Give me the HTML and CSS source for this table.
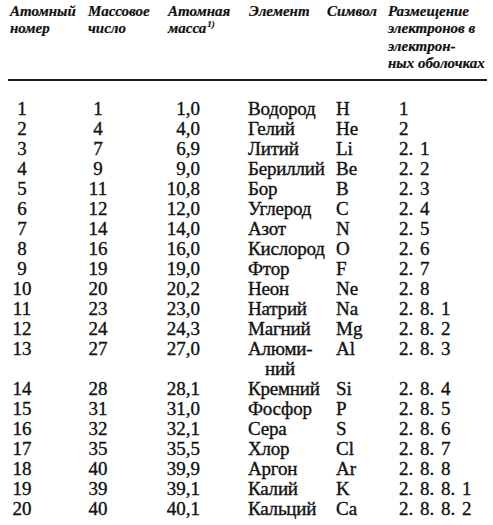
FILE: index.html
```html
<!DOCTYPE html>
<html lang="ru">
<head>
<meta charset="utf-8">
<title>Элементы</title>
<link rel="stylesheet" href="styles.css">
</head>
<body>
<div class="sheet">
  <div class="head">
    <div class="h h1">Атомный<br>номер</div>
    <div class="h h2">Массовое<br>число</div>
    <div class="h h3">Атомная<br>масса<sup>1)</sup></div>
    <div class="h h4">Элемент</div>
    <div class="h h5">Символ</div>
    <div class="h h6">Размещение<br>электронов в<br>электрон-<br>ных оболочках</div>
  </div>
  <div class="rule"></div>
  <div class="rows">
    <div class="c n">1</div><div class="c m">1</div><div class="c w">1,0</div><div class="c e">Водород</div><div class="c s">H</div><div class="c k">1</div>
    <div class="c n">2</div><div class="c m">4</div><div class="c w">4,0</div><div class="c e">Гелий</div><div class="c s">He</div><div class="c k">2</div>
    <div class="c n">3</div><div class="c m">7</div><div class="c w">6,9</div><div class="c e">Литий</div><div class="c s">Li</div><div class="c k">2. 1</div>
    <div class="c n">4</div><div class="c m">9</div><div class="c w">9,0</div><div class="c e">Бериллий</div><div class="c s">Be</div><div class="c k">2. 2</div>
    <div class="c n">5</div><div class="c m">11</div><div class="c w">10,8</div><div class="c e">Бор</div><div class="c s">B</div><div class="c k">2. 3</div>
    <div class="c n">6</div><div class="c m">12</div><div class="c w">12,0</div><div class="c e">Углерод</div><div class="c s">C</div><div class="c k">2. 4</div>
    <div class="c n">7</div><div class="c m">14</div><div class="c w">14,0</div><div class="c e">Азот</div><div class="c s">N</div><div class="c k">2. 5</div>
    <div class="c n">8</div><div class="c m">16</div><div class="c w">16,0</div><div class="c e">Кислород</div><div class="c s">O</div><div class="c k">2. 6</div>
    <div class="c n">9</div><div class="c m">19</div><div class="c w">19,0</div><div class="c e">Фтор</div><div class="c s">F</div><div class="c k">2. 7</div>
    <div class="c n">10</div><div class="c m">20</div><div class="c w">20,2</div><div class="c e">Неон</div><div class="c s">Ne</div><div class="c k">2. 8</div>
    <div class="c n">11</div><div class="c m">23</div><div class="c w">23,0</div><div class="c e">Натрий</div><div class="c s">Na</div><div class="c k">2. 8. 1</div>
    <div class="c n">12</div><div class="c m">24</div><div class="c w">24,3</div><div class="c e">Магний</div><div class="c s">Mg</div><div class="c k">2. 8. 2</div>
    <div class="c n">13</div><div class="c m">27</div><div class="c w">27,0</div><div class="c e">Алюми-<br><span class="cont">ний</span></div><div class="c s">Al</div><div class="c k">2. 8. 3</div>
    <div class="c n">14</div><div class="c m">28</div><div class="c w">28,1</div><div class="c e">Кремний</div><div class="c s">Si</div><div class="c k">2. 8. 4</div>
    <div class="c n">15</div><div class="c m">31</div><div class="c w">31,0</div><div class="c e">Фосфор</div><div class="c s">P</div><div class="c k">2. 8. 5</div>
    <div class="c n">16</div><div class="c m">32</div><div class="c w">32,1</div><div class="c e">Сера</div><div class="c s">S</div><div class="c k">2. 8. 6</div>
    <div class="c n">17</div><div class="c m">35</div><div class="c w">35,5</div><div class="c e">Хлор</div><div class="c s">Cl</div><div class="c k">2. 8. 7</div>
    <div class="c n">18</div><div class="c m">40</div><div class="c w">39,9</div><div class="c e">Аргон</div><div class="c s">Ar</div><div class="c k">2. 8. 8</div>
    <div class="c n">19</div><div class="c m">39</div><div class="c w">39,1</div><div class="c e">Калий</div><div class="c s">K</div><div class="c k">2. 8. 8. 1</div>
    <div class="c n">20</div><div class="c m">40</div><div class="c w">40,1</div><div class="c e">Кальций</div><div class="c s">Ca</div><div class="c k">2. 8. 8. 2</div>
  </div>
</div>
</body>
</html>
```
FILE: styles.css
```css
html, body {
  margin: 0;
  padding: 0;
  background: #ffffff;
}
.sheet {
  width: 479px;
  margin-left: 8px;
  padding-top: 3px;
  color: #111111;
}
.head {
  display: flex;
  font-family: "Liberation Serif", serif;
  font-weight: bold;
  font-style: italic;
  font-size: 15px;
  line-height: 17.3px;
  -webkit-text-stroke: 0.2px #111111;
}
.h { flex: none; white-space: nowrap; }
.h1 { width: 78px; margin-left: 2px; }
.h2 { width: 80px; }
.h3 { width: 81px; }
.h4 { width: 78px; }
.h5 { width: 61px; }
.h6 { flex: 1; }
.h sup {
  font-size: 9px;
  line-height: 0;
  vertical-align: 6px;
  margin-left: 1px;
}
.rule {
  margin-top: 7px;
  height: 2px;
  background: #1a1a1a;
}
.rows {
  margin-top: 18px;
  display: grid;
  grid-template-columns: 28px 124px 40px 136px 63px 1fr;
  font-family: "Liberation Serif", serif;
  font-size: 19px;
  line-height: 20px;
  -webkit-text-stroke: 0.35px #111111;
}
.c { white-space: nowrap; }
.n, .m { text-align: center; }
.w { text-align: right; }
.e { padding-left: 48px; letter-spacing: -0.2px; }
.cont { padding-left: 17px; }
.k { word-spacing: 2px; }
```
